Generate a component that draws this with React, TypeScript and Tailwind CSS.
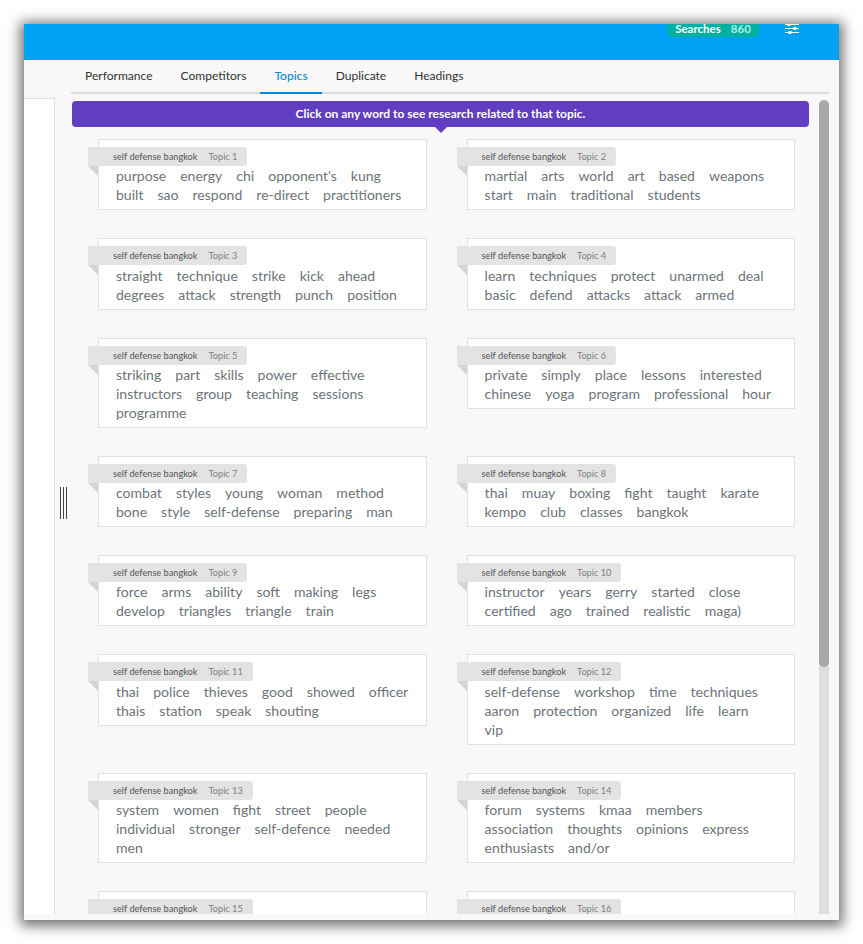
const topics: string[][] = [
  ["purpose", "energy", "chi", "opponent's", "kung", "built", "sao", "respond", "re-direct", "practitioners"],
  ["martial", "arts", "world", "art", "based", "weapons", "start", "main", "traditional", "students"],
  ["straight", "technique", "strike", "kick", "ahead", "degrees", "attack", "strength", "punch", "position"],
  ["learn", "techniques", "protect", "unarmed", "deal", "basic", "defend", "attacks", "attack", "armed"],
  ["striking", "part", "skills", "power", "effective", "instructors", "group", "teaching", "sessions", "programme"],
  ["private", "simply", "place", "lessons", "interested", "chinese", "yoga", "program", "professional", "hour"],
  ["combat", "styles", "young", "woman", "method", "bone", "style", "self-defense", "preparing", "man"],
  ["thai", "muay", "boxing", "fight", "taught", "karate", "kempo", "club", "classes", "bangkok"],
  ["force", "arms", "ability", "soft", "making", "legs", "develop", "triangles", "triangle", "train"],
  ["instructor", "years", "gerry", "started", "close", "certified", "ago", "trained", "realistic", "maga)"],
  ["thai", "police", "thieves", "good", "showed", "officer", "thais", "station", "speak", "shouting"],
  ["self-defense", "workshop", "time", "techniques", "aaron", "protection", "organized", "life", "learn", "vip"],
  ["system", "women", "fight", "street", "people", "individual", "stronger", "self-defence", "needed", "men"],
  ["forum", "systems", "kmaa", "members", "association", "thoughts", "opinions", "express", "enthusiasts", "and/or"],
  [],
  [],
];

function TopicCard({ words, index }: { words: string[]; index: number }) {
  return (
    <div className="relative border border-[#e2e2e2] bg-white pt-[26.3px] pb-[5.1px] pl-[17px] pr-[17px]">
      <div className="absolute left-[-11px] top-[7px] flex h-[19px] items-center gap-[11px] rounded-r-[3px] bg-[#e3e3e3] pl-[25px] pr-[10px] pt-px text-[9.2px]">
        <span className="text-[#555]">self defense bangkok</span>
        <span className="text-[#808080]">Topic {index + 1}</span>
      </div>
      <div className="absolute left-[-11px] top-[26px] h-0 w-0 border-t-[10px] border-l-[10px] border-t-[#d4d4d4] border-l-transparent"></div>
      <div className="flex flex-wrap gap-x-[14px] text-[14.05px] leading-[19px] text-[#6e747b]">
        {words.map((w, i) => (
          <span key={i}>{w}</span>
        ))}
      </div>
    </div>
  );
}

function App() {
  const tabs = ["Performance", "Competitors", "Topics", "Duplicate", "Headings"];

  return (
    <div className="h-[944px] w-[863px] overflow-hidden bg-white pl-[24px] pt-[24px] font-['Lato','Noto_Sans',sans-serif]">
      <div className="flex h-[896px] w-[815px] flex-col overflow-hidden bg-[#f8f8f8] shadow-[0_2px_12px_4px_rgba(0,0,0,0.55)]">
        <div className="flex h-[36px] shrink-0 items-start justify-end bg-[#00a0f5] pr-[39px]">
          <div className="flex h-[13px] w-[92px] items-start justify-center gap-[10px] rounded-b-[5px] bg-[#00b1a1] text-[11.5px] font-bold leading-[10px]">
            <span className="text-white">Searches</span>
            <span className="text-[#a8eee2]">860</span>
          </div>
          <svg className="ml-[25px]" width="16" height="13" viewBox="0 0 16 13" fill="none">
            <path d="M1 0.5h14M1 4.5h14M1 8.5h14" stroke="#fff" strokeWidth="1" />
            <path d="M5 0v2M11 3v3M6 7v3" stroke="#fff" strokeWidth="3" />
          </svg>
        </div>

        <div className="flex min-h-0 flex-1 pb-[6px]">
          <div className="mt-[38px] w-[31px] shrink-0 border-t border-r border-[#e2e2e2] bg-white"></div>
          <div className="flex w-[16px] shrink-0 justify-center pt-[427px]">
            <div className="mt-0 flex h-[32px] w-[7px] justify-between border-x border-[#444]">
              <div className="ml-[2px] w-px bg-[#444]"></div>
            </div>
          </div>

          <div className="flex min-w-0 flex-1 flex-col pr-[10px]">
            <div className="flex h-[34px] shrink-0 border-b-2 border-[#dcdcdc]">
              {tabs.map((t) => (
                <div
                  key={t}
                  className={
                    t === "Topics"
                      ? "mb-[-2px] border-b-2 border-[#0288d1] px-[14px] pt-[7px] text-[12.05px] font-medium text-[#0a8ad4]"
                      : "px-[14px] pt-[7px] text-[12.05px] text-[#333]"
                  }
                >
                  {t}
                </div>
              ))}
            </div>

            <div className="flex min-h-0 flex-1 pt-[6px]">
              <div className="min-w-0 flex-1 overflow-hidden">
                <div className="relative ml-px mt-px flex h-[26px] w-[737px] items-center justify-center rounded-[4px] bg-[#613dc1] text-[12px] font-bold text-white">
                  Click on any word to see research related to that topic.
                  <div className="absolute left-[363px] top-[26px] h-0 w-0 border-x-[6px] border-t-[6px] border-x-transparent border-t-[#613dc1]"></div>
                </div>
                <div className="ml-[27px] mt-[12px] grid w-[697px] grid-cols-[329px_328px] items-start gap-x-[39.6px] gap-y-[27.88px]">
                  {topics.map((words, i) => (
                    <TopicCard key={i} words={words} index={i} />
                  ))}
                </div>
              </div>
              <div className="w-[10px] shrink-0 rounded-t-[5px] bg-[#dedede]">
                <div className="h-[567px] rounded-[5px] bg-[#a8a8a8]"></div>
              </div>
            </div>
          </div>
        </div>
      </div>
    </div>
  );
}

export default App;
